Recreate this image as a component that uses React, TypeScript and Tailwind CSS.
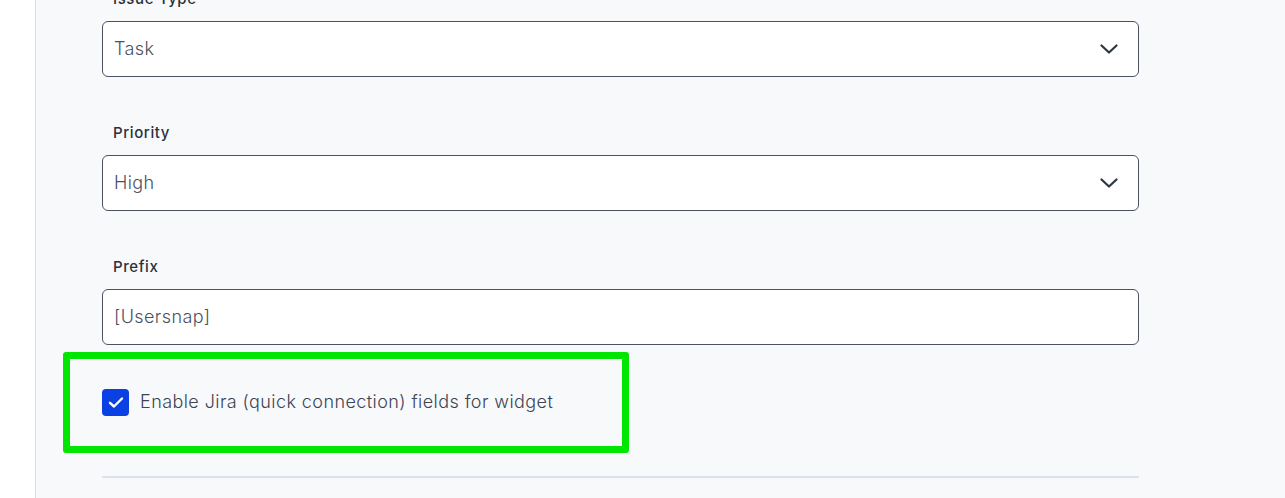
import React from "react";

const font = { fontFamily: "Inter, 'Noto Sans', sans-serif" };

function Chevron() {
  return (
    <svg width="18" height="10" viewBox="0 0 18 10" fill="none" className="shrink-0">
      <path d="M1.5 1.5 L9 8.5 L16.5 1.5" stroke="#2d3442" strokeWidth="2.2" strokeLinecap="round" strokeLinejoin="round" />
    </svg>
  );
}

function Field({ label, value, select, first }: { label: string; value: string; select?: boolean; first?: boolean }) {
  return (
    <div className={first ? "-mt-[11px]" : "mt-[46px]"}>
      <div className="h-[20px] pl-[11px] text-[15px] leading-[20px] font-medium tracking-[0.6px] text-[#2a313d] mb-[12px]">{label}</div>
      <div className="h-[56px] w-[1037px] rounded-[6px] border border-[#4b5362] bg-white flex items-center pl-[11px] pr-[20px]">
        <span className="flex-1 text-[18px] tracking-[0.4px] text-[#4a5160] font-light -mt-[2px]">{value}</span>
        {select && <Chevron />}
      </div>
    </div>
  );
}

export default function App() {
  return (
    <div className="flex h-[498px] w-[1285px] overflow-hidden bg-white" style={font}>
      <div className="w-[36px] shrink-0 bg-white border-r border-[#d9dee7]" />
      <div className="flex-1 bg-[#f8f9fb] pl-[66px] overflow-hidden">
        <Field label="Issue Type" value="Task" select first />
        <Field label="Priority" value="High" select />
        <Field label="Prefix" value="[Usersnap]" />
        <div className="relative mt-[44px] flex items-center gap-[11px] h-[27px]">
          <div className="absolute -left-[39px] -top-[37px] w-[566px] h-[101px] border-[7px] border-[#00e600] rounded-[3px] pointer-events-none" />
          <div className="w-[27px] h-[27px] rounded-[4px] bg-[#0b41e3] flex items-center justify-center">
            <svg width="16" height="13" viewBox="0 0 16 13" fill="none">
              <path d="M2 6.8 L6 10.5 L14 2.5" stroke="white" strokeWidth="2.4" strokeLinecap="round" strokeLinejoin="round" />
            </svg>
          </div>
          <span className="text-[18px] tracking-[0.42px] text-[#3d4453] font-light -mt-[2px]">Enable Jira (quick connection) fields for widget</span>
        </div>
        <div className="mt-[60px] w-[1037px] h-[2px] bg-[#dbe2ec]" />
      </div>
    </div>
  );
}
